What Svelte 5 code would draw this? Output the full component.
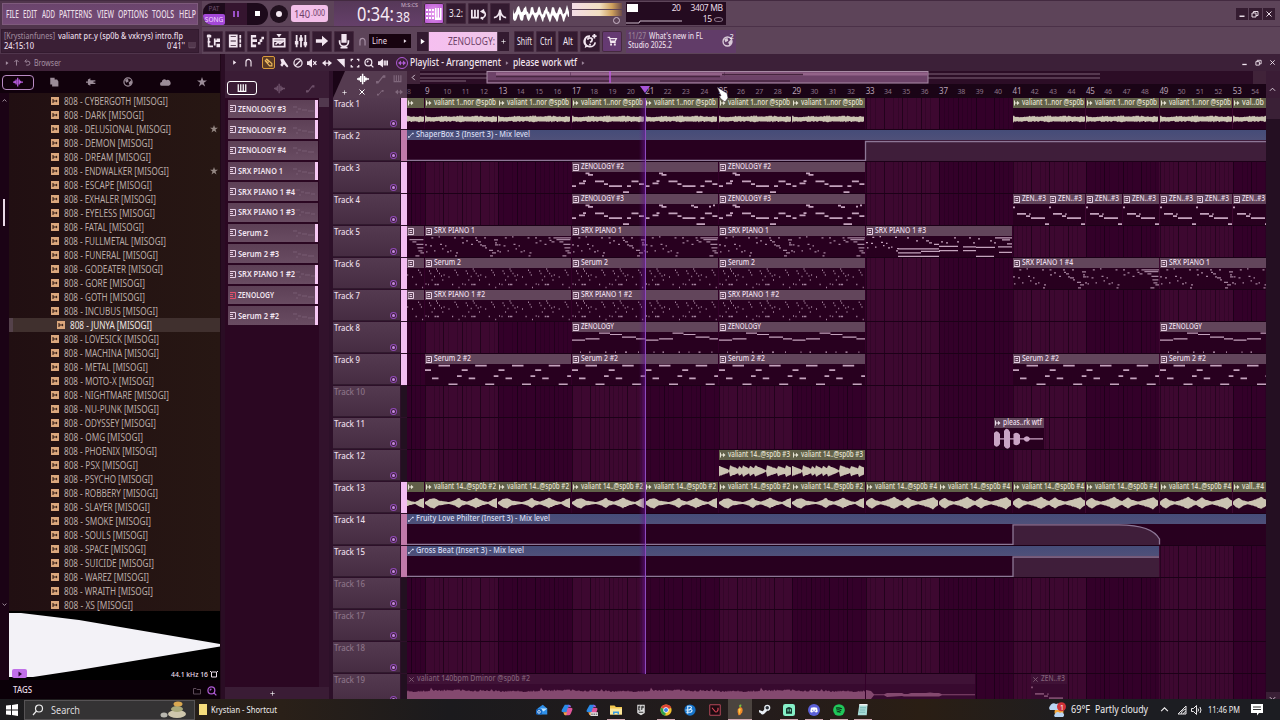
<script lang="ts">
	type Clip = {
		at: number;
		len: number;
		label: string;
		lw: number;
		kind: 'notes' | 'audio' | 'auto' | 'voice';
		shape?: string;
		phase?: number;
		muted?: boolean;
	};

	const BAR = 18.363; // px per bar
	const ORIGIN = 8.02; // first visible bar

	const menu: [string, number][] = [
		['FILE', 13], ['EDIT', 14], ['ADD', 13], ['PATTERNS', 33],
		['VIEW', 17], ['OPTIONS', 30], ['TOOLS', 22], ['HELP', 17]
	];

	const samples: [string, number][] = [
		['CYBERGOTH', 104], ['DARK', 80], ['DELUSIONAL', 107], ['DEMON', 89], ['DREAM', 87],
		['ENDWALKER', 105], ['ESCAPE', 88], ['EXHALER', 92], ['EYELESS', 91], ['FATAL', 80],
		['FULLMETAL', 102], ['FUNERAL', 94], ['GODEATER', 99], ['GORE', 81], ['GOTH', 81],
		['INCUBUS', 94], ['JUNYA', 82], ['LOVESICK', 95], ['MACHINA', 95], ['METAL', 84],
		['MOTO-X', 90], ['NIGHTMARE', 105], ['NU-PUNK', 95], ['ODYSSEY', 92], ['OMG', 79],
		['PHOENIX', 93], ['PSX', 74], ['PSYCHO', 89], ['ROBBERY', 94], ['SLAYER', 86],
		['SMOKE', 87], ['SOULS', 84], ['SPACE', 82], ['SUICIDE', 90], ['WAREZ', 85],
		['WRAITH', 89], ['XS', 69]
	];
	const starred = ['DELUSIONAL', 'ENDWALKER'];

	const patterns: [string, number, boolean][] = [
		['ZENOLOGY #3', 48, true], ['ZENOLOGY #2', 48, true], ['ZENOLOGY #4', 48, false],
		['SRX PIANO 1', 45, true], ['SRX PIANO 1 #4', 57, false], ['SRX PIANO 1 #3', 57, false],
		['Serum 2', 30, true], ['Serum 2 #3', 41, false], ['SRX PIANO 1 #2', 57, true],
		['ZENOLOGY', 36, true], ['Serum 2 #2', 41, true]
	];

	// period (px) then x, y, w of every note
	const melody = [
		[0, 14, 4], [7, 11.3, 6], [11, 9, 3], [13.5, 1.3, 4], [16, 2.8, 5], [23, 9.2, 9], [32, 12, 4],
		[37, 14, 13], [51, 20, 6], [55, 14, 4], [59.5, 9.2, 7], [67, 12, 5]
	];
	const piano = [
		[0, 9, 2], [1, 16, 1.5], [5, 10, 2], [6.3, 2, 2], [9, 15, 1.5], [13.5, 1, 1.5], [15, 8.5, 2],
		[17, 13, 1.5], [20, 10, 1.5], [22, 16, 2], [25, 15, 1.5], [29, 2, 2], [30, 20, 2], [31, 17, 2],
		[36.5, 2, 2], [37, 7, 2], [41, 5, 2], [46, 8.5, 2], [50, 2, 2], [51, 4.5, 2], [53, 6, 3],
		[55, 9, 2], [57, 10, 4], [59, 2, 2], [60, 12, 2], [64, 14.5, 4], [65, 20, 3], [67, 17, 4],
		[69, 4, 4], [70, 7, 2], [70, 9, 3], [72, 15, 2]
	];
	const pianoTail = [
		...piano.filter((n) => n[0] < 55),
		[55, 2, 18], [58, 3.8, 14], [61, 6, 4], [65, 8.5, 7], [66, 12, 6], [67, 15, 4], [64, 20, 4], [69, 17, 4]
	];
	const shapes: Record<string, { period: number; notes: number[][]; tall?: boolean; bold?: boolean }> = {
		zen2: { period: 73.45, bold: true, notes: melody },
		zen3: {
			period: 146.9,
			bold: true,
			notes: [
				...melody,
				...melody.map(([x, y, w]) => [x + 73.45, y, w]),
				[119, 1.5, 3], [122, 3, 4], [130, 20, 3], [137, 2.5, 2], [141, 1.2, 2]
			]
		},
		zen: {
			period: 73.45,
			notes: [
				[0, 8.3, 13], [13.5, 7, 14], [27, 1.2, 11], [38, 2.6, 12], [50, 5.3, 14], [64, 7, 9],
				[8, 20.3, 1], [17, 20.3, 1.5], [33, 20.3, 1.5], [43, 20.3, 1], [53, 20.3, 2], [66, 20.3, 1]
			]
		},
		zenShort: {
			period: 36.73,
			bold: true,
			notes: [[0, 3.3, 2], [4, 9.7, 9], [13, 12, 4], [16.3, 10, 1.3], [18, 14, 14], [32, 20, 5]]
		},
		piano: {
			period: 146.9,
			notes: [...piano, ...pianoTail.map(([x, y, w]) => [x + 73.45, y, w])]
		},
		piano3: {
			period: 146.9,
			notes: [
				...piano.filter((n) => n[0] < 32).map(([x, y, w]) => [x, y * 0.75, w]),
				[32, 13, 41], [32, 17, 23], [55, 15.5, 19], [32, 20.5, 41], [73, 10.5, 19], [73, 14.8, 19],
				[97, 11, 13], [97, 14.8, 13], [110, 11.5, 19], [110, 20.5, 18], [129, 2, 17], [132, 11, 14],
				[133, 16.5, 13], [41, 2, 2], [50, 5, 2], [56, 2, 2], [60, 5, 3], [63, 7, 3], [68, 8.5, 5],
				[75, 6, 2], [80, 7, 2], [88, 2, 2], [91, 6, 2], [103, 2, 2], [107, 7, 2], [112, 3, 2],
				[124, 5, 2], [128, 7, 2], [136, 4, 8], [141, 8, 5]
			]
		},
		serum: {
			period: 36.73,
			tall: true,
			notes: [
				[0.5, 16, 1], [4, 3, 1], [5.3, 5.5, 1], [6.6, 12, 1], [9, 8.5, 1], [11, 1, 1], [12, 3, 1],
				[14, 5.5, 1], [16, 8, 1], [17.3, 12, 1], [18.6, 7, 1], [23.5, 9, 1], [29.5, 2.2, 1],
				[31, 4.5, 1], [32.3, 7, 1], [9.5, 16.5, 1.5], [11.5, 16.5, 2.4], [27, 16.5, 1.2],
				[33.5, 19.5, 1], [3, 16.5, 1]
			]
		},
		serum2: {
			period: 36.73,
			bold: true,
			notes: [[0, 6, 6], [7, 14.3, 6.5], [13.5, 1.4, 11.5], [23.5, 20.3, 9], [32, 12, 4.7]]
		}
	};

	// amplitude keyframes [x, amp] of the audio clips
	const envs: Record<string, { period: number; keys: number[][]; rough: number }> = {
		loop: {
			period: 73.45,
			rough: 0.42,
			keys: [[0, 4.5], [2, 3], [12, 2.8], [20, 3.6], [28, 2.6], [36, 4.2], [40, 3], [52, 3.6], [64, 3], [73.4, 3.8]]
		},
		pad: {
			period: 73.45,
			rough: 0.16,
			keys: [
				[0, 1], [5, 4.6], [9, 5.6], [14, 2.6], [24, 1], [30, 3], [34, 5.6], [37, 2.8], [42, 1.5],
				[48, 4], [51, 5.6], [57, 2.6], [63, 1], [69, 4.4], [72, 5.8], [73.4, 2]
			]
		},
		pad4: {
			period: 73.45,
			rough: 0.16,
			keys: [
				[0, 1.5], [3, 4.4], [6, 5.8], [10, 3], [15, 1.4], [22, 3.6], [28, 6.4], [33, 3.4], [36, 2],
				[42, 6], [46, 3.4], [52, 1.5], [60, 3.8], [67, 6.4], [70, 4], [73.4, 2]
			]
		},
		chop: {
			period: 73.45,
			rough: 0.14,
			keys: [
				[0, 5.6], [9, 2], [10, 0.6], [11, 6], [19, 2.4], [20, 5.4], [23, 3], [24, 6], [30, 2.6],
				[31, 5.4], [35, 3], [36, 6], [45, 2], [47, 0.6], [48, 6], [58, 2.4], [59, 5.4], [66, 3],
				[67, 6], [73.4, 3.4]
			]
		},
		full: {
			period: 110,
			rough: 0.24,
			keys: [[0, 8], [22, 7.5], [24, 11], [27, 8], [48, 9], [70, 8], [80, 9], [98, 7.5], [110, 8]]
		}
	};

	function noise(i: number) {
		const s = Math.sin(i * 127.1 + 311.7) * 43758.5453;
		return s - Math.floor(s);
	}

	function envAt(keys: number[][], x: number) {
		for (let i = 1; i < keys.length; i++) {
			const [x1, a1] = keys[i];
			const [x0, a0] = keys[i - 1];
			if (x <= x1) return a0 + ((a1 - a0) * (x - x0)) / (x1 - x0);
		}
		return keys[keys.length - 1][1];
	}

	function wavePath(shape: string, w: number, phase = 0) {
		const { period, keys, rough } = envs[shape];
		const mid = shape === 'full' ? 14 : 11;
		let top = '';
		let bottom = '';
		for (let x = 0; x <= w; x += 1) {
			const u = (x + phase) % period;
			const a = envAt(keys, u) * (1 - rough * noise(Math.round(u)));
			const b = envAt(keys, u) * (1 - rough * noise(Math.round(u) + 500));
			top += `L${x} ${(mid - a).toFixed(1)}`;
			bottom = `L${x} ${(mid + b).toFixed(1)}` + bottom;
		}
		return `M0 ${mid}${top}${bottom}Z`;
	}

	function notePath(shape: string, w: number, phase = 0) {
		const { period, notes, tall, bold } = shapes[shape];
		const h = bold ? 1.7 : tall ? 1.5 : 1.2;
		let d = '';
		for (let base = -phase; base < w; base += period) {
			for (const [nx, ny, nw] of notes) {
				const x = base + nx;
				if (x < 0 || x >= w) continue;
				const right = Math.min(nw, w - x);
				d += `M${x.toFixed(1)} ${ny - 0.7}h${right.toFixed(1)}v${h}h${-right.toFixed(1)}z`;
			}
		}
		return d;
	}

	const px = (bar: number) => (bar - ORIGIN) * BAR;

	function seq(label: string, lw: number, shape: string, starts: number[], len: number): Clip[] {
		return starts.map((at) => ({ at, len, label, lw, kind: 'notes', shape }));
	}
	function audio(label: string, lw: number, shape: string, starts: number[], len = 4): Clip[] {
		return starts.map((at) => ({ at, len, label, lw, kind: 'audio', shape }));
	}
	function stub(kind: 'notes' | 'audio', shape: string, phase: number): Clip {
		return { at: ORIGIN, len: 9 - ORIGIN, label: '', lw: 0, kind, shape, phase };
	}
	const END = 54.83;

	const lanes: Clip[][] = [
		[
			stub('audio', 'loop', 55),
			...audio('valiant 1..nor @sp0b', 62, 'loop', [9, 13, 17, 21, 25, 29, 41, 45, 49]),
			...audio('val..0b', 22, 'loop', [53], END - 53)
		],
		[{ at: ORIGIN, len: END - ORIGIN, label: 'ShaperBox 3 (Insert 3) - Mix level', lw: 114, kind: 'auto', shape: 'shaper' }],
		seq('ZENOLOGY #2', 43, 'zen2', [17, 25], 8),
		[
			...seq('ZENOLOGY #3', 43, 'zen3', [17, 25], 8),
			...seq('ZEN..#3', 24, 'zenShort', [41, 43, 45, 47, 49, 51], 2),
			...seq('ZEN..#3', 23, 'zenShort', [53], END - 53)
		],
		[
			stub('notes', 'piano', 129),
			...seq('SRX PIANO 1', 41, 'piano', [9, 17, 25], 8),
			...seq('SRX PIANO 1 #3', 51, 'piano3', [33], 8)
		],
		[
			stub('notes', 'serum', 18.4),
			...seq('Serum 2', 27, 'serum', [9, 17, 25], 8),
			...seq('SRX PIANO 1 #4', 51, 'piano', [41], 8),
			...seq('SRX PIANO 1', 41, 'piano', [49], END - 49)
		],
		[stub('notes', 'serum', 18.4), ...seq('SRX PIANO 1 #2', 51, 'serum', [9, 17, 25], 8)],
		[...seq('ZENOLOGY', 33, 'zen', [17, 25], 8), ...seq('ZENOLOGY', 33, 'zen', [49], END - 49)],
		[
			...seq('Serum 2 #2', 37, 'serum2', [9, 17, 25, 41], 8),
			...seq('Serum 2 #2', 37, 'serum2', [49], END - 49)
		],
		[],
		[{ at: 40, len: 2.75, label: 'pleas..rk wtf', lw: 39, kind: 'voice' }],
		audio('valiant 14..@sp0b #3', 62, 'chop', [25, 29]),
		[
			stub('audio', 'pad', 55),
			...audio('valiant 14..@sp0b #2', 62, 'pad', [9, 13, 17, 21, 25, 29]),
			...audio('valiant 14..@sp0b #4', 62, 'pad4', [33, 37, 41, 45, 49]),
			...audio('vall..#4', 22, 'pad4', [53], END - 53)
		],
		[{ at: ORIGIN, len: END - ORIGIN, label: 'Fruity Love Philter (Insert 3) - Mix level', lw: 134, kind: 'auto', shape: 'philter' }],
		[{ at: ORIGIN, len: 49 - ORIGIN, label: 'Gross Beat (Insert 3) - Mix level', lw: 108, kind: 'auto', shape: 'gross' }],
		[],
		[],
		[],
		[
			{ at: ORIGIN, len: 25, label: 'valiant 140bpm Dminor @sp0b #2', lw: 113, kind: 'audio', shape: 'full', muted: true },
			{ at: 33, len: 6, label: '', lw: 0, kind: 'voice', muted: true },
			{ at: 42, len: 2, label: 'ZEN..#3', lw: 24, kind: 'notes', shape: 'zenShort', muted: true }
		]
	];

	const autos: Record<string, { line: string; fill: string }> = {
		shaper: { line: 'M0 20.5H458.5V1.5H860', fill: 'M458.5 21V1.5H860V21Z' },
		philter: {
			line: 'M0 20.5H606V.8H712Q745 1 752.5 15V20.5',
			fill: 'M606 21V.8H712Q745 1 752.5 15V21Z'
		},
		gross: { line: 'M0 20.5H606V1H752.5', fill: 'M606 21V1H752.5V21Z' }
	};

	const audioMarks = [1, 3, 4, 5, 6, 7, 8, 9, 13];
	const autoMarks = [2, 14, 15];
	const emptyTracks = [10, 16, 17, 18, 19];

	const bars = Array.from({ length: 46 }, (_, i) => i + 9);

	// stroke (s) and fill (f) outlines on a 16 unit box
	const icons: Record<string, { s?: string; f?: string }> = {
		play: { f: 'M5 3l7 5-7 5z' },
		tree: { s: 'M3 4v10h5M10 5v8M10 8h3M1.500 1.500H5', f: 'M1 1h5v3H1zM2 8h3v2H2zM12 5h4v4h-4zM12 11h4v4h-4z' },
		rack: { s: 'M2 1.5h8v3H2zM2 6.5h8v3H2zM2 11.5h8v3H2z', f: 'M13 1h2v4h-2zM13 6h2v4h-2zM13 11h2v4h-2z' },
		roll: { f: 'M1 1h6v3H3v2h5v3H3v3h4v3H1zM9 9h3v3H9zM11 6h3v3h-3zM13 3h3v3h-3z' },
		list: { s: 'M1.500 5.500h13v9h-13zM4 12l3-3 2 2 4-3M1 8h14', f: 'M5 0h6L8 4z' },
		mixer: { s: 'M3 1v14M8 1v14M13 1v14', f: 'M1 8h4v4H1zM6 4h4v4H6zM11 9h4v4h-4z' },
		arrow: { f: 'M1 6h7V2l7 6-7 6v-4H1z' },
		mic: { s: 'M3 7v2a5 5 0 0010 0V7M8 14v2M4 15.5h8', f: 'M5 0h6v10H5z' },
		magnet: { s: 'M3.5 15V7a4.5 4.5 0 019 0v8' },
		pencil: { s: 'M2 5l3-3 9 8v4h-4zM4 7l3-3M6 9l3-3' },
		brush: { f: 'M2 2l5-1 3 5 5 7-2 2-5-5-3 4-3-3 2-3z' },
		nope: { s: 'M8 1.5a6.5 6.5 0 100 13 6.5 6.5 0 000-13zM3.5 12.5l9-9' },
		mute: { s: 'M10 5l5 6M15 5l-5 6', f: 'M0 5h3l5-4v14l-5-4H0z' },
		slip: { f: 'M0 8l6-5v10zM16 8l-6-5v10zM6 7h4v2H6z' },
		slice: { f: 'M1 2l13-1v14L9 10z' },
		select: { s: 'M2 5V2h3M11 2h3v3M14 11v3h-3M5 14H2v-3' },
		zoom: { s: 'M7 1.5a5.5 5.5 0 100 11 5.5 5.5 0 000-11zM11 11l4 4M4.5 7L7 4.5' },
		speaker: { s: 'M10 4v8M12.5 4v8M15 4v8', f: 'M0 5h3l5-4v14l-5-4H0z' },
		keys: { s: 'M2 2v11.5h12V2M6 2v11M10 2v11' },
		wave: { s: 'M0 8h2M3 6v4M5 4v8M7.5 1v14M10 4v8M12 6v4M13 8h3' },
		auto: { s: 'M1 13h3l7-9h3', f: 'M0 11h4v4H0zM11 2h4v4h-4z' },
		grid: { f: 'M0 3h2v2H0zM0 7h2v2H0zM0 11h2v2H0zM3 3h2v2H3zM3 7h2v2H3zM3 11h2v2H3zM6 3h2v2H6zM6 7h2v2H6zM6 11h2v2H6zM9 2h1.5v9.500H11.500V2H13v9.500h1V2h1.500v12H9z' },
		metro: { s: 'M1 12c3 0 6-3 7-9 1 6 4 9 7 9M8 3v12' },
		loop: { s: 'M1 3v9h7V3M4.5 3v9M11 12a3.5 3.5 0 103-7M15 3l-3 2 3 2M11 12l3 2' },
		help: { s: 'M8 2.5a6 6 0 106 7M8 2.5a6 6 0 00-5 10M5.5 6.5q0-2 2.5-2t2.5 2T8 9.5M13 0v5M10.5 2.5h5', f: 'M7 11h2v2H7zM2 16l1-5 3 3z' },
		cart: { s: 'M1 2h3l2 8h8M5 4h10l-2 4H6', f: 'M5 12h3v3H5zM11 12h3v3h-3z' },
		files: { f: 'M2 1h7v3h4l2 3v8H5v-3H2z' },
		plug: { f: 'M0 7h3V4l4-2v3h8v2h-3v2h3v2H7v3l-4-2V9H0z' },
		globe: { s: 'M8 1.5a6.5 6.5 0 100 13 6.5 6.5 0 000-13z', f: 'M3 4l5-1 1 4-4 2zM9 9l4-4 2 4-4 5z' },
		cloud: { f: 'M3 14a3 3 0 010-6 4 4 0 017-3 4 4 0 014 9z' },
		star: { f: 'M8 0l2 5.5h6l-5 3.7 2 6-5-3.7-5 3.7 2-6-5-3.7h6z' },
		up: { s: 'M8 15V3M3 7l5-5 5 5' },
		back: { s: 'M3 5h6a4 4 0 010 9H5M6 1L2 5l4 4' },
		folder: { s: 'M1 3h5l2 2h7v9H1z' },
		chip: { s: 'M3 4h10v10H3zM0 2l3 3M16 2l-3 3' },
		close: { s: 'M3 3l10 10M13 3L3 13' },
		min: { f: 'M3 11h10v3H3z' },
		restore: { s: 'M2 6h8v8H2zM5 6V3h9v8h-4' },
		plus: { s: 'M8 1v14M1 8h14' },
		chevUp: { s: 'M2 11l6-6 6 6' },
		chevDown: { s: 'M2 5l6 6 6-6' },
		chevLeft: { s: 'M11 2L5 8l6 6' }
	};

	const tools = ['tree', 'rack', 'roll', 'list', 'mixer', 'arrow', 'mic'];
	const brushes = ['brush', 'nope', 'mute', 'slip', 'slice', 'select', 'zoom', 'speaker'];
	const apps: [string, boolean][] = [
		['outlook', false], ['copilot', false], ['copilot3', false], ['explorer', true], ['epic', false],
		['chrome', true], ['bnet', false], ['valorant', false], ['fl', true], ['steam', false],
		['wave', true], ['discord', true], ['spotify', true], ['notes', true]
	];

	// scope trace: a thick ragged band around a sine
	const scopeTop: string[] = [];
	const scopeBottom: string[] = [];
	for (let x = 0; x <= 56; x++) {
		const mid = 10 + Math.sin(x * 0.9) * 3.6;
		scopeTop.push(`${x},${(mid - 2.4 - noise(x) * 3).toFixed(1)}`);
		scopeBottom.unshift(`${x},${(mid + 2.4 + noise(x + 90) * 3).toFixed(1)}`);
	}
	const scope = [...scopeTop, ...scopeBottom].join(' ');
</script>

{#snippet fit(text: string, w: number, size: number)}
	<svg class="fit" width={w} height={size + 3}>
		<text x="0" y={size} font-size={size} textLength={w} lengthAdjust="spacingAndGlyphs">{text}</text>
	</svg>
{/snippet}

{#snippet icon(name: string, size: number)}
	<svg class="icon" width={size} height={size} viewBox="0 0 16 16">
		{#if icons[name].f}<path class="f" d={icons[name].f} />{/if}
		{#if icons[name].s}<path class="s" d={icons[name].s} />{/if}
	</svg>
{/snippet}

{#snippet app(name: string)}
	<svg class="icon" width="12" height="12" viewBox="0 0 16 16">
		{#if name === 'outlook'}
			<path fill="#2f8fe8" d="M2 6l7-5 6 5v8H2z" /><path fill="#bfe3ff" d="M6 6h9l-5 4z" />
			<rect x="0" y="7" width="8" height="7" rx="1" fill="#1565c0" /><circle cx="4" cy="10.5" r="1.8" fill="none" stroke="#fff" />
		{:else if name === 'copilot' || name === 'copilot3'}
			<path fill="#2a8be8" d="M5 1h6L8 11H3q-3 0-2-3z" /><path fill="#8f62e6" d="M10 1q3 0 3.5 3H9.5z" />
			<path fill="#e0559a" d="M9 5h4q3 0 2 3l-2 5q-1 2-3 2H6z" /><path fill="#f2a04a" d="M3 11h5l-1 4H6q-2 0-3-4z" />
			{#if name === 'copilot3'}<path fill="#ddd" d="M6 11h10v5H6z" /><path fill="#222" d="M7 13h2v1H7zM10 13h2v1h-2zM13 13h2v1h-2z" />{/if}
		{:else if name === 'explorer'}
			<path fill="#f3c84e" d="M0 2h6l2 2h8v10H0z" /><path fill="#fce79a" d="M0 6h16v8H0z" /><path fill="#3a9be0" d="M4 10h8v4h-2v-2H6v2H4z" />
		{:else if name === 'epic'}
			<path fill="#ddd" d="M3 1h10v11l-5 3-5-3z" /><path stroke="#222" stroke-width="1.2" fill="none" d="M5 3v5M5 3h2M5 5h2M5 8h2M9 3v5M9 3h2v2H9M5 11h6" />
		{:else if name === 'chrome'}
			<circle cx="8" cy="8" r="7.5" fill="#f2c230" /><path fill="#df4436" d="M8 8L1.5 5a7.5 7.5 0 0113.5 0z" /><path fill="#2fa04c" d="M8 8l-1 7.5A7.5 7.5 0 011.5 5z" />
			<circle cx="8" cy="8" r="3.6" fill="#fff" /><circle cx="8" cy="8" r="2.7" fill="#3f80ea" />
		{:else if name === 'bnet'}
			<circle cx="8" cy="8" r="7.5" fill="#1673c9" /><path fill="none" stroke="#d3ecff" stroke-width="1.6" d="M5 13V3h3q4 1 0 4 5 1 1 4H3M2 8h6" />
		{:else if name === 'valorant'}
			<path fill="#1c0a10" stroke="#b8495a" stroke-width="1.3" d="M1 1h14v14H1z" /><path fill="none" stroke="#e2475a" stroke-width="1.5" d="M4 5l5 6M12 5v3l-2 3" />
		{:else if name === 'fl'}
			<path fill="#f08a28" d="M8 4q5 1 3 7-2 4-5 4-2-4-1-8z" /><path fill="#f8cf52" d="M6 7q2-2 3 0l-2 7z" /><path fill="#7bbf3e" d="M7 4q-1-4 3-3 0 2-1 3z" />
		{:else if name === 'steam'}
			<circle cx="11" cy="5" r="3.2" fill="#2a3038" stroke="#e8eef4" stroke-width="1.8" /><path fill="#e8eef4" d="M0 8l5 1.5L8 6l3 3-4 4a3 3 0 01-5-1L0 11z" />
		{:else if name === 'wave'}
			<rect x="0" y="0" width="16" height="16" rx="3" fill="#86f0c8" /><path fill="#143a30" d="M4 6q4-4 8 0v7H4z" /><path fill="#86f0c8" d="M6 7h1.5v3H6zM9 7h1.5v3H9z" />
		{:else if name === 'discord'}
			<circle cx="8" cy="8" r="8" fill="#5b5fd8" /><path fill="#fff" d="M4 5q4-1.5 8 0l1 5q-2 2-3 1l-.5-1h-3L6 11q-2 1-3-1z" /><path fill="#5b5fd8" d="M5.5 7.5h1.5V9H5.5zM9 7.5h1.5V9H9z" />
		{:else if name === 'spotify'}
			<circle cx="8" cy="8" r="7.8" fill="#20c75a" /><path fill="none" stroke="#0c2a16" stroke-width="1.4" d="M4 5.5q4-1 8 1M4.5 8q3.5-1 6.5 1M5 10.5q3-1 5 .8" />
		{:else}
			<path fill="#a8dcd8" d="M3 1h11l-1 14H1z" /><path stroke="#6aa8a8" d="M4 5h8M4 8h7M3 11h8" /><path fill="#f2f2f2" d="M3 0h11v2H3z" />
		{/if}
	</svg>
{/snippet}

<div class="screen">
	<header class="top">
		<div class="corner">
			<nav class="menu">
				{#each menu as [name, w]}{@render fit(name, w, 10)}{/each}
			</nav>
			<div class="hint">
				<div class="hint-line">
					<span class="dim">{@render fit('[Krystianfunes]', 51, 8.5)}</span>{@render fit('valiant pr..y (sp0b & vxkrys) intro.flp', 125, 8.5)}
				</div>
				<div class="hint-line">
					{@render fit('24:15:10', 30, 8.5)}<span class="grow"></span>{@render fit("0'41''", 18, 8.5)}
					<span class="dim shade">{@render icon('keys', 8)}</span>
				</div>
			</div>
		</div>

		<div class="bars">
			<div class="bar">
				<div class="transport">
					<div class="mode"><span class="pat">PAT</span><span class="song">SONG</span></div>
					<div class="key lit-pause"><i></i><i></i></div>
					<div class="key"><b class="stop"></b></div>
				</div>
				<div class="rec"><b></b></div>
				<div class="tempo">{@render fit('140', 16, 11)}{@render fit('.000', 14, 8)}</div>
				<div class="clock">
					<span class="time">{@render fit('0:34:', 37, 20)}<span class="cents">{@render fit('38', 14, 15)}</span></span>
					<span class="unit">{@render fit('M:S:CS', 17, 5)}</span>
				</div>
				<div class="btn hot">{@render icon('grid', 16)}</div>
				<div class="btn">{@render fit('3.2:', 14, 10)}</div>
				<div class="btn">{@render icon('loop', 14)}</div>
				<div class="btn">{@render icon('metro', 14)}</div>
				<svg class="osc" width="56" height="20"><polygon points={scope} /></svg>
				<div class="meter"><i></i><i></i><b></b></div>
				<div class="cpu">
					<span class="poly"></span>
					<svg class="graph" width="56" height="5"><path d="M0 4h13l1-2h42" /></svg>
					<div class="cpu-nums">
						<span>20</span><span>3407 MB</span>
						<span></span><span>15 <em></em></span>
					</div>
				</div>
				<span class="grow"></span>
				<div class="win boxed">
					{#each ['min', 'restore', 'close'] as n}<span>{@render icon(n, 8)}</span>{/each}
				</div>
			</div>

			<div class="bar">
				{#each tools as t}<div class="btn">{@render icon(t, 14)}</div>{/each}
				<span class="snap-icon">{@render icon('magnet', 9)}</span>
				<div class="snap">{@render fit('Line', 15, 8.5)}{@render icon('play', 6)}</div>
				<div class="chooser">
					<span class="nub">{@render icon('play', 9)}</span>
					<span class="pattern">{@render fit('ZENOLOGY:', 47, 11)}</span>
					<span class="nub">{@render icon('plus', 5)}</span>
				</div>
				<div class="btn">{@render fit('Shift', 15, 10)}</div>
				<div class="btn">{@render fit('Ctrl', 12, 10)}</div>
				<div class="btn">{@render fit('Alt', 10, 10)}</div>
				<div class="btn">{@render icon('help', 14)}</div>
				<div class="btn shop">{@render icon('cart', 10)}</div>
				<div class="news">
					<div>
						<div class="hint-line"><span class="dim">{@render fit('11/27', 18, 8)}</span>{@render fit("What's new in FL", 54, 8)}</div>
						<div class="hint-line">{@render fit('Studio 2025.2', 44, 8)}</div>
					</div>
					<span class="news-globe">{@render icon('globe', 11)}<sup>2</sup></span>
				</div>
			</div>
		</div>
	</header>

	<main class="work">
		<aside class="browser">
			<div class="browser-head">
				{@render icon('play', 6)}{@render icon('up', 7)}{@render icon('back', 7)}
				{@render fit('Browser', 27, 8.5)}
			</div>
			<div class="tabs">
				<span class="tab on">{@render icon('wave', 10)}</span>
				{#each ['files', 'plug', 'globe', 'cloud', 'star'] as t}
					<span class="tab">{@render icon(t, 10)}</span>
				{/each}
			</div>
			<div class="tree">
				<div class="rail">
					{@render icon('chevUp', 5)}
					<i></i>
					{@render icon('chevDown', 5)}
				</div>
				<ul>
					{#each samples as [name, w]}
						<li class:on={name === 'JUNYA'}>
							<svg class="file" width="8" height="8" viewBox="0 0 8 8"><path d="M0 0h8v8H0z" /><path class="ink" d="M1.5 2h1v1.5H5V2.5L6.5 4 5 5.5v-1H2.500V6h-1z" /></svg>
							{@render fit(`808 - ${name} [MISOGI]`, w, 10.5)}
							{#if starred.includes(name)}<span class="fav">{@render icon('star', 8)}</span>{/if}
						</li>
					{/each}
				</ul>
			</div>
			<div class="preview">
				<svg width="211" height="67"><path d="M0 2H12L70 9 211 33V35.5L70 59 24 66H0Z" /></svg>
				<span class="preview-play">{@render icon('play', 8)}</span>
				<span class="rate">{@render fit('44.1 kHz 16', 37, 7.5)}{@render icon('chip', 8)}</span>
			</div>
			<div class="tags">
				{@render fit('TAGS', 19, 8)}
				<span class="grow"></span>
				<span class="faint">{@render icon('folder', 8)}</span>
				<span class="violet">{@render icon('zoom', 10)}</span>
			</div>
		</aside>

		<section class="playlist">
			<div class="title">
				{@render icon('play', 7)}
				<span class="mag">{@render icon('magnet', 9)}</span>
				<span class="draw">{@render icon('pencil', 9)}</span>
				{#each brushes as b}{@render icon(b, 10)}{/each}
				<span class="violet ring">{@render icon('slip', 8)}</span>
				{@render fit('Playlist - Arrangement', 91, 10)}
				<span class="sep">{@render icon('play', 6)}</span>
				{@render fit('please work wtf', 64, 10)}
				<span class="sep">{@render icon('play', 6)}</span>
				<span class="grow"></span>
				<div class="win">
					{#each ['min', 'restore', 'close'] as n}<span>{@render icon(n, 7)}</span>{/each}
				</div>
			</div>

			<div class="body">
				<div class="picker">
					<div class="picker-tabs">
						<span class="on">{@render icon('keys', 10)}</span>
						<span>{@render icon('wave', 11)}</span>
						<span>{@render icon('auto', 9)}</span>
					</div>
					<div class="picker-main">
						<div class="picker-list">
							{#each patterns as [name, w, used]}
								<div class="pat-item" class:used class:current={name === 'ZENOLOGY'}>
									<svg class="score" width="6" height="7"><path d="M0 .5H5.5V6.5H0M0 2.5H3M0 4.5H3" /></svg>
									{@render fit(name, w, 9)}
									<svg class="thumb" width="22" height="8"><path d="M0 2h4M5 4h3M9 5h5M15 6h6M3 7h2" /></svg>
								</div>
							{/each}
						</div>
						<div class="picker-scroll"><i></i></div>
					</div>
					<div class="picker-add">{@render icon('plus', 5)}</div>
				</div>

				<div class="arranger">
					<div class="arr-head">
						<div class="arr-tools">
							<div><span class="bright">{@render icon('wave', 12)}</span>{@render icon('auto', 10)}{@render icon('keys', 9)}</div>
							<div><span class="bright">{@render icon('plus', 5)}</span><span class="bright">{@render icon('close', 8)}</span>{@render icon('auto', 7)}{@render icon('slip', 8)}</div>
						</div>
						<div class="arr-right">
							<div class="overview">
								<span class="ov-nub">{@render icon('chevLeft', 7)}</span>
								<svg width="833" height="13">
									<path class="ov-track" d="M0 3H680M0 7H680M0 10H46" />
									<rect class="ov-win" x="67" y=".5" width="441" height="11.5" />
									<path class="ov-light" d="M76 3H150M151 3H304M305 3H508" />
									<path class="ov-dark" d="M76 5.5H300M302 3.5H383M68 10H190M240 10H370" />
									<path class="ov-cursor" d="M190 0V12" />
								</svg>
								<span class="ov-end"></span>
							</div>
							<div class="ruler">
								<span class="first">8</span>
								{#each bars as b}
									<span class:strong={b % 4 === 1}>{b}</span>
								{/each}
							</div>
						</div>
						<div class="corner-up">{@render icon('chevUp', 7)}</div>
					</div>

					<div class="arr-body">
						<div class="heads">
							{#each lanes as _, i}
								<div class="head" class:empty={emptyTracks.includes(i + 1)}>
									<div class="plate">
										{@render fit(`Track ${i + 1}`, i < 9 ? 26 : 31, 9)}
										<span class="led"></span>
									</div>
									<div
										class="mark"
										class:pink={audioMarks.includes(i + 1)}
										class:rose={autoMarks.includes(i + 1)}
									></div>
								</div>
							{/each}
						</div>

						<div class="lanes">
							{#each lanes as clips}
								<div class="lane">
									{#each clips as c}
										{@const w = c.len * BAR - 0.6}
										<div class="clip {c.kind}" class:muted={c.muted} style="left: {px(c.at)}px; width: {w}px">
											<div class="clip-head">
												{#if c.muted && c.label}
													{@render icon('close', 7)}
												{:else if c.kind === 'notes'}
													<svg class="score" width="6" height="7"><path d="M0 .5H5.5V6.5H0ZM1.5 2.5H4M1.5 4.5H4" /></svg>
												{:else if c.kind === 'auto'}
													{@render icon('auto', 6)}
												{:else if !c.muted}
													<svg class="arrowed" width="6" height="6"><path d="M0 .5H1V2.5H3V.8L5.5 3 3 5.2V3.5H1V5.5H0Z" /></svg>
												{/if}
												{#if c.label}{@render fit(c.label, c.lw, 8.3)}{/if}
											</div>
											<svg class="clip-body" width={w} height="21">
												{#if c.kind === 'notes'}
													<path class="notes" class:soft={c.shape === 'serum' || c.shape === 'piano'} d={notePath(c.shape ?? '', w, c.phase)} />
												{:else if c.kind === 'audio'}
													<path class="wave" d={wavePath(c.shape ?? '', w, c.phase)} />
												{:else if c.kind === 'auto'}
													<path class="area" d={autos[c.shape ?? ''].fill} />
													<path class="curve" d={autos[c.shape ?? ''].line} />
												{:else if c.muted}
													<path class="wave" d="M0 6L5 7 8 10.300H18L21 9H36L38 10H42L45 9H60L64 8.500 68 9H73L76 10.300H110V11.300H76L73 12.500H38L36 12 21 13 18 11.300H8L5 15 0 16Z" />
												{:else}
													<path class="wave" d="M0 5Q3 1 6 6V10.300H10V3Q13-2 16 4V10.300H19.500V6Q23 3 26 7V10.300H29.500Q33 6 36 10.300H49V11.500H36Q33 16 29.500 11.500H26V15Q23 19 19.500 16V11.500H16V19Q13 23 10 18V11.500H6V16Q3 21 0 17Z" />
												{/if}
											</svg>
										</div>
									{/each}
								</div>
							{/each}
							<div class="playhead"></div>
						</div>

						<div class="scroll"><i></i><span class="grow"></span><b>{@render icon('chevDown', 7)}</b></div>
					</div>

					<svg class="flag" width="10" height="7"><path d="M0 0H10L5 7Z" /></svg>
					<svg class="cursor" width="13" height="16" viewBox="0 0 13 16"><path d="M0 0l8 5 2 1 1 5-3 4-4-3-2-3 2 0z" /></svg>
				</div>
			</div>
		</section>
	</main>

	<footer class="taskbar">
		<svg class="start" width="12" height="12"><path d="M0 1.5L5 1V5.5H0ZM6 1l6-1V5.5H6ZM0 6.5H5V11L0 10.5ZM6 6.500h6V12L6 11Z" /></svg>
		<div class="search">
			<svg width="12" height="12" viewBox="0 0 12 12"><circle cx="7" cy="4.5" r="3.5" /><path d="M4.5 7L1 11" /></svg>
			{@render fit('Search', 29, 11)}
			<svg class="stones" width="28" height="18" viewBox="0 0 28 18"><ellipse cx="4" cy="14" rx="3.5" ry="2.5" fill="#b9b8b0" /><ellipse cx="17" cy="13" rx="9" ry="4" fill="#cfc7ad" /><ellipse cx="17" cy="8" rx="6" ry="3" fill="#a8a87a" /><ellipse cx="18" cy="3" rx="4.5" ry="2.5" fill="#d9a850" /></svg>
		</div>
		<div class="task"><i></i>{@render fit('Krystian - Shortcut', 66, 9.5)}</div>
		<div class="apps">
			{#each apps as [name, open]}
				<div class="app" class:open class:active={name === 'fl'}>{@render app(name)}</div>
			{/each}
		</div>
		<div class="tray">
			<svg width="19" height="16" viewBox="0 0 19 16"><circle cx="11" cy="10" r="4.5" fill="#f5a83c" /><path fill="#b9d4f2" d="M2 8a3 3 0 010-4 4 4 0 016-2 3 3 0 013 6zM7 15a2 2 0 010-3 3 3 0 015-1 2 2 0 013 4z" /><circle cx="13.5" cy="4.8" r="4.5" fill="#d03238" /><text x="12" y="7.5" font-size="7" fill="#fff">1</text></svg>
			<span class="weather">{@render fit('69°F', 19, 10)}{@render fit('Partly cloudy', 53, 10)}</span>
			<span class="chev">{@render icon('chevUp', 9)}</span>
			<svg class="net" width="10" height="10"><path d="M1 9L9 1V9ZM4 9A6 6 0 019 4M6.5 9A3 3 0 019 6.5" /></svg>
			<svg class="net vol" width="12" height="10"><path d="M.5 3.5h2l3-3v9l-3-3h-2zM7 3.5q1 1.500 0 3M9 2q2 3 0 6" /></svg>
			{@render fit('11:46 PM', 32, 9.5)}
			<svg class="note" width="12" height="12"><path d="M0 0H12V9H8L6 11.5V9H0Z" /><path class="ln" d="M2 3H10M2 5.5H10" /></svg>
		</div>
	</footer>
</div>

<style>
	:global(body) {
		margin: 0;
		background: #12000e;
	}
	.screen {
		width: 1280px;
		height: 720px;
		overflow: hidden;
		display: grid;
		grid-template-rows: 54px 645px 21px;
		background: #2a0d24;
		color: #e9dce7;
		font-family: 'Noto Sans', 'Open Sans', sans-serif;
		font-size: 9px;
		line-height: 1;
	}
	.fit,
	.icon {
		display: block;
		flex: none;
		overflow: visible;
	}
	.fit text {
		fill: currentColor;
	}
	.icon .f {
		fill: currentColor;
	}
	.icon .s {
		fill: none;
		stroke: currentColor;
		stroke-width: 2;
	}
	.grow {
		flex: 1;
	}
	.dim {
		color: #9a8397;
	}
	.shade {
		opacity: 0.5;
	}
	.violet {
		color: #b05ad6;
	}
	.faint {
		color: #5c4a58;
	}

	/* ---------- toolbar ---------- */
	.top {
		display: flex;
		background: #5d4459;
		border-top: 1px solid #432a40;
		box-sizing: border-box;
	}
	.corner {
		width: 202px;
		padding: 2px 4px 0 2px;
		box-sizing: border-box;
		background: #50354c;
	}
	.menu {
		height: 22px;
		display: flex;
		align-items: center;
		gap: 4.4px;
		padding-left: 3px;
		background: linear-gradient(#6a446c, #764c78);
		border: 1px solid #7e5a7c;
		box-sizing: border-box;
		font-weight: 500;
	}
	.hint {
		margin-top: 5px;
		height: 22px;
		padding: 1px 2px;
		box-sizing: border-box;
		background: #3a1f35;
		outline: 1px solid #331a2f;
	}
	.hint-line {
		display: flex;
		align-items: center;
		gap: 3px;
		height: 9.5px;
		font-weight: 500;
	}
	.bars {
		flex: 1;
		min-width: 0;
	}
	.bar {
		height: 26px;
		display: flex;
		align-items: center;
		gap: 2px;
		padding-left: 1px;
		box-sizing: border-box;
		border-bottom: 1px solid #4b3148;
	}
	.bar + .bar {
		height: 28px;
		border-bottom: 0;
	}
	.btn {
		width: 19.9px;
		height: 21px;
		flex: none;
		display: flex;
		align-items: center;
		justify-content: center;
		background: #331a30;
		box-shadow: inset 0 0 0 1px #45293f;
		border-radius: 2px;
		color: #f2e6f0;
	}
	.btn.hot {
		background: radial-gradient(#e9a4ee, #b44ed2);
		color: #fff;
	}
	.btn.shop {
		background: #653a72;
	}
	.transport {
		width: 65px;
		height: 22px;
		flex: none;
		display: flex;
		border-radius: 9px 11px 11px 9px;
		overflow: hidden;
		background: #1d0a1b;
	}
	.mode {
		width: 22px;
		display: flex;
		flex-direction: column;
		font-size: 6.5px;
		text-align: center;
	}
	.mode span {
		height: 11px;
		line-height: 11px;
	}
	.pat {
		color: #6b4d68;
	}
	.song {
		background: #a348d8;
		color: #f3dcff;
		border-radius: 2px;
	}
	.key {
		flex: 1;
		display: flex;
		align-items: center;
		justify-content: center;
		gap: 2px;
	}
	.key.lit-pause {
		background: #35152f;
	}
	.key i {
		width: 2px;
		height: 6px;
		background: #9b50c8;
	}
	.stop {
		width: 5px;
		height: 5px;
		background: #fff;
	}
	.rec {
		width: 18px;
		height: 18px;
		margin: 0 1px 0 0;
		flex: none;
		border-radius: 50%;
		background: #21101f;
		display: flex;
		align-items: center;
		justify-content: center;
	}
	.rec b {
		width: 6px;
		height: 6px;
		border-radius: 50%;
		background: #f5e9f3;
	}
	.tempo {
		width: 37px;
		height: 17px;
		flex: none;
		display: flex;
		align-items: center;
		justify-content: center;
		gap: 1px;
		border-radius: 3px;
		background: #f3bfe9;
		color: #6d4068;
	}
	.clock {
		width: 88px;
		height: 25px;
		margin: 0 0 0 4px;
		flex: none;
		display: flex;
		align-items: flex-start;
		background: linear-gradient(#563858, #65406a);
	}
	.time {
		display: flex;
		gap: 2px;
		margin-left: 23px;
		color: #f6e9f4;
	}
	.cents {
		margin-top: 6px;
	}
	.unit {
		width: 0;
		margin: 1px 0 0 -9px;
		color: #cdb6ca;
	}
	.osc {
		margin: 0 1px;
		flex: none;
	}
	.osc polygon {
		fill: #fff;
	}
	.meter {
		width: 50px;
		height: 21px;
		flex: none;
		display: flex;
		flex-direction: column;
		gap: 1px;
	}
	.meter i {
		height: 6px;
		background: linear-gradient(90deg, #f3dde6, #f2dfc2 55%, #cfa15c 80%, #6d4c48);
	}
	.meter b {
		width: 5px;
		height: 5px;
		margin: 0 2px 0 auto;
		border: 1px solid #cdb9cb;
		border-radius: 50%;
	}
	.cpu {
		width: 100px;
		height: 23px;
		margin-left: 2px;
		flex: none;
		display: grid;
		grid-template: 1fr 6px / 36px 1fr;
		background: #240b20;
	}
	.poly {
		width: 11px;
		height: 8px;
		margin: 2px 0 0 1px;
		background: #fff;
	}
	.graph {
		grid-row: 2;
		grid-column: 1 / 3;
		fill: none;
		stroke: #cdbccb;
	}
	.cpu-nums {
		grid-row: 1 / 3;
		grid-column: 2;
		display: grid;
		grid-template-columns: 19px 1fr;
		align-items: center;
		justify-items: end;
		padding-right: 3px;
		font-size: 8.5px;
		letter-spacing: -0.4px;
	}
	.cpu-nums em {
		display: inline-block;
		width: 7px;
		height: 3px;
		border: 1px solid #8b768a;
		border-radius: 50%;
	}
	.win {
		display: flex;
		gap: 7px;
		padding-right: 4px;
	}
	.boxed {
		gap: 1px;
		padding-right: 5px;
	}
	.boxed span {
		width: 12.5px;
		height: 12px;
		display: flex;
		align-items: center;
		justify-content: center;
		background: #351c31;
	}
	.snap-icon {
		margin-left: 2px;
		color: #a891a6;
	}
	.snap {
		width: 42px;
		height: 14px;
		padding: 0 3px;
		box-sizing: border-box;
		flex: none;
		display: flex;
		align-items: center;
		justify-content: space-between;
		background: #17030f;
	}
	.chooser {
		height: 19px;
		margin: 0 3px 0 4px;
		flex: none;
		display: flex;
		gap: 1px;
	}
	.nub {
		width: 11px;
		display: flex;
		align-items: center;
		justify-content: center;
		background: #331a30;
		color: #fff;
	}
	.pattern {
		width: 68px;
		display: flex;
		align-items: center;
		justify-content: flex-end;
		padding-right: 2px;
		box-sizing: border-box;
		background: linear-gradient(90deg, #f6bff0, #efc6e9);
		color: #6d4068;
	}
	.news {
		width: 110px;
		height: 23px;
		margin-left: 2px;
		padding: 2px;
		box-sizing: border-box;
		display: flex;
		justify-content: space-between;
		background: #613c68;
	}
	.news-globe {
		display: flex;
		align-items: center;
		color: #d9cbd8;
	}
	.news-globe sup {
		width: 4px;
		margin: -10px 0 0 -3px;
		font-size: 7px;
		color: #fff;
	}

	/* ---------- browser ---------- */
	.work {
		display: grid;
		grid-template-columns: 221px 1fr;
		min-height: 0;
	}
	.browser {
		display: grid;
		grid-template-rows: 17px 22px 518px 69px 19px;
		border-right: 1px solid #200819;
		background: #1b0315;
	}
	.browser-head {
		display: flex;
		align-items: center;
		gap: 3.4px;
		padding-left: 4px;
		background: #3f2239;
		color: #a58fa2;
	}
	.tabs {
		display: flex;
		align-items: center;
		background: #11010c;
		color: #9b8c98;
	}
	.tab {
		width: 37px;
		height: 16px;
		display: flex;
		align-items: center;
		justify-content: center;
	}
	.tab.on {
		width: 32px;
		margin: 0 1px 0 2px;
		height: 15px;
		border: 1px solid #b98bc4;
		border-radius: 4px;
		box-sizing: border-box;
		color: #b65bdc;
	}
	.tree {
		display: flex;
		overflow: hidden;
	}
	.rail {
		width: 9px;
		padding: 5px 2px 4px;
		box-sizing: border-box;
		display: flex;
		flex-direction: column;
	}
	.rail i {
		width: 2px;
		height: 27px;
		margin: 96px 0 auto 1px;
		background: #ead9e8;
	}
	ul {
		flex: 1;
		margin: 0;
		padding: 1px 0 0;
		list-style: none;
		background: linear-gradient(90deg, #210f12, #271713);
	}
	li {
		height: 14px;
		display: flex;
		align-items: center;
		gap: 5px;
		padding-left: 42px;
		color: #b9aaa6;
	}
	li.on {
		padding-left: 44px;
		border-left: 4px solid #54414a;
		background: #40302e;
		color: #f0e6e2;
	}
	.file path {
		fill: #dba77c;
	}
	.file .ink {
		fill: #2a1510;
	}
	.fav {
		margin: 0 2px 0 auto;
		color: #948782;
	}
	.preview {
		position: relative;
		margin-left: 9px;
		background: #000;
	}
	.preview > svg {
		display: block;
		fill: #f3f2f7;
	}
	.preview-play,
	.rate {
		position: absolute;
		bottom: 2px;
		display: flex;
		align-items: center;
	}
	.preview-play {
		left: 3px;
		width: 15px;
		height: 9px;
		justify-content: center;
		background: #bf6fe8;
		border-radius: 2px;
		color: #2b0c35;
	}
	.rate {
		right: 2px;
		bottom: 1px;
		gap: 2px;
		font-weight: 500;
	}
	.tags {
		display: flex;
		align-items: center;
		gap: 6px;
		padding: 2px 3px 0 13px;
		background: #0b0008;
		font-weight: 500;
	}

	/* ---------- playlist ---------- */
	.playlist {
		display: grid;
		grid-template-rows: 17px 1fr;
		min-width: 0;
		margin-left: 4px;
		background: #2d1029;
	}
	.title {
		display: flex;
		align-items: center;
		gap: 4.1px;
		padding-left: 6px;
		background: #3c2038;
		font-weight: 500;
		color: #f2e6f0;
	}
	.mag {
		margin: 0 5px 0 2px;
	}
	.draw {
		margin-right: 0;
		padding: 1px;
		border: 1px solid #d99a3c;
		border-radius: 2px;
		background: #5b3b25;
		color: #f0bb62;
	}
	.ring {
		margin: 0 -2px 0 4px;
		padding: 1px;
		border: 1px solid #b05ad6;
		border-radius: 50%;
	}
	.sep {
		margin-right: -1px;
		margin-left: -1px;
		color: #9b8499;
	}
	.body {
		display: grid;
		grid-template-columns: 104px 1fr;
		gap: 4px;
		min-height: 0;
	}
	.picker {
		display: grid;
		grid-template-rows: 27px 1fr 12px;
		min-width: 0;
		background: #2b0722;
	}
	.picker-tabs {
		display: flex;
		align-items: center;
		gap: 13px;
		padding: 7px 0 0 2px;
		background: #3a1c35;
		color: #6d5069;
	}
	.picker-tabs span {
		width: 18px;
		display: flex;
		justify-content: center;
	}
	.picker-tabs .on {
		width: 28px;
		height: 12px;
		align-items: center;
		border: 1px solid #fff;
		border-radius: 3px;
		color: #fff;
	}
	.picker-main {
		display: flex;
		min-width: 0;
	}
	.picker-list {
		flex: 1;
		min-width: 0;
		padding: 1.5px 1px 0 3px;
		display: flex;
		flex-direction: column;
		gap: 2px;
	}
	.pat-item {
		height: 18.7px;
		display: flex;
		align-items: center;
		gap: 1.5px;
		padding-left: 2px;
		box-sizing: border-box;
		background: linear-gradient(#5d4056, #694c62);
		border-right: 3px solid transparent;
		background-clip: padding-box;
		color: #f2e5f0;
		font-weight: 600;
		overflow: hidden;
	}
	.pat-item:not(.used) {
		background-clip: border-box;
	}
	.pat-item.used {
		border-right-color: #f6c8f4;
	}
	.pat-item.current .score {
		stroke: #e0506c;
	}
	.score {
		flex: none;
		fill: none;
		stroke: #e6cfe3;
	}
	.thumb {
		min-width: 0;
		margin-left: auto;
		stroke: #7f6279;
		stroke-width: 0.8;
	}
	.picker-scroll {
		width: 10px;
		flex: none;
		background: #32122c;
	}
	.picker-scroll i {
		display: block;
		height: 9px;
		background: #51384e;
	}
	.picker-add {
		display: flex;
		align-items: center;
		justify-content: center;
		padding-right: 9px;
		background: #3a1c35;
		color: #fff;
	}

	.arranger {
		position: relative;
		display: grid;
		grid-template-rows: 27px 601px;
		overflow: hidden;
	}
	.arr-head {
		display: grid;
		grid-template-columns: 74px 859px 1fr;
		background: #1a0416;
	}
	.arr-tools {
		display: flex;
		flex-direction: column;
		justify-content: space-around;
		background: #553b50;
		clip-path: polygon(12px 0, 100% 0, 100% 100%, 0 100%);
		color: #80687c;
	}
	.arr-tools div {
		display: flex;
		align-items: center;
		gap: 7px;
		padding-left: 24px;
	}
	.arr-tools div + div {
		padding-left: 9px;
		gap: 11px;
	}
	.bright {
		color: #fff;
	}
	.arr-right {
		display: grid;
		grid-template-rows: 13px 14px;
		min-width: 0;
	}
	.overview {
		display: flex;
		background: #2c0d26;
	}
	.ov-nub {
		width: 13px;
		display: flex;
		align-items: center;
		justify-content: center;
		background: #402339;
	}
	.ov-track {
		stroke: #55384f;
		stroke-width: 2;
	}
	.ov-win {
		fill: #6d4268;
		stroke: #a88ba5;
	}
	.ov-light {
		stroke: #936389;
		stroke-width: 3;
	}
	.ov-dark {
		stroke: #46243f;
		stroke-width: 1.5;
	}
	.ov-cursor {
		stroke: #bc5adf;
		stroke-width: 1.5;
	}
	.ov-end {
		flex: 1;
		background: #402339;
	}
	.ruler {
		display: flex;
		align-items: center;
		overflow: hidden;
		font-size: 7px;
		letter-spacing: -0.2px;
		color: #8c7488;
	}
	.ruler span {
		width: 18.363px;
		flex: none;
	}
	.ruler .first {
		width: 18px;
		color: #6b5367;
	}
	.ruler .strong {
		font-size: 8px;
		color: #b8a1b5;
	}
	.corner-up {
		display: flex;
		align-items: flex-end;
		padding: 0 0 5px 3px;
		background: #3a1c35;
	}
	.arr-body {
		display: grid;
		grid-template-columns: 74px 859px 1fr;
		min-height: 0;
		overflow: hidden;
	}
	.head {
		height: 32px;
		display: flex;
	}
	.plate {
		width: 67px;
		height: 31px;
		padding: 0 0 0 1px;
		box-sizing: border-box;
		display: flex;
		justify-content: space-between;
		background: linear-gradient(#543a50, #462c42);
		border-bottom: 1px solid #311a2e;
		color: #eadde8;
		font-weight: 500;
	}
	.empty .plate {
		color: #8b7387;
	}
	.led {
		width: 3px;
		height: 3px;
		align-self: flex-end;
		margin: 0 5px 3px 0;
		border-radius: 50%;
		background: #c48ae0;
		box-shadow:
			0 0 0 1px #3d2039,
			0 0 0 2px #8f48b6;
	}
	.mark {
		width: 6px;
		height: 31px;
		margin-left: 1px;
		background: #221020;
	}
	.mark.pink {
		background: #f3bdf2;
	}
	.mark.rose {
		background: #c07aaa;
	}
	.lanes {
		position: relative;
		overflow: hidden;
		background:
			repeating-linear-gradient(90deg, rgba(20, 0, 18, 0.55) 0 1px, transparent 1px 18.363px) 18px 0,
			repeating-linear-gradient(90deg, rgba(20, 0, 18, 0.25) 0 0.8px, transparent 0.8px 4.591px) 18px 0,
			repeating-linear-gradient(90deg, #3d0830 0 73.45px, #330029 73.45px 146.9px) 18px 0,
			#330029;
	}
	.lane {
		position: relative;
		height: 32px;
		box-shadow: inset 0 -1px #1c0017;
	}
	.clip {
		position: absolute;
		top: 0;
		height: 31px;
		overflow: hidden;
		background: #28001f;
	}
	.clip-head {
		height: 10px;
		display: flex;
		align-items: center;
		gap: 2px;
		padding-left: 1px;
		background: #62455b;
		color: #eddfeb;
		font-weight: 500;
	}
	.clip-head .fit {
		margin-top: -1px;
	}
	.clip-body {
		display: block;
	}
	.notes {
		fill: #c4a3bd;
	}
	.notes.soft {
		fill: #a5849f;
	}
	.audio .clip-head {
		background: #616049;
		color: #e6e3d3;
	}
	.arrowed {
		flex: none;
		fill: currentColor;
	}
	.wave {
		fill: #cbc4b2;
	}
	.voice .wave {
		fill: #c9a4c4;
	}
	.auto .clip-head {
		background: linear-gradient(#454c78, #4f5079);
		color: #d7dbf0;
	}
	.area {
		fill: #432340;
		opacity: 0.85;
	}
	.curve {
		fill: none;
		stroke: #8d7796;
		stroke-width: 1.3;
	}
	.clip.muted {
		background: #380a2f;
	}
	.clip.muted .clip-head {
		background: #3f1236;
		color: #826078;
	}
	.clip.muted .wave {
		fill: #84496f;
	}
	.clip.muted .notes {
		fill: #7c4a6c;
	}
	.playhead {
		position: absolute;
		left: 232px;
		top: 0;
		width: 6px;
		height: 576px;
		background: linear-gradient(90deg, transparent, rgba(105, 20, 150, 0.55));
		border-right: 1px solid #8c4cbd;
	}
	.scroll {
		display: flex;
		flex-direction: column;
		background: #240f22;
	}
	.scroll i {
		height: 21px;
		background: #3a2036;
	}
	.scroll b {
		height: 14px;
		padding: 3px 0 0 3px;
		box-sizing: border-box;
		background: #3a2036;
	}
	.flag {
		position: absolute;
		left: 307px;
		top: 15px;
		fill: #a855d8;
	}
	.cursor {
		position: absolute;
		left: 384px;
		top: 16px;
		fill: #fff;
		stroke: #3a2a38;
		stroke-width: 0.6;
	}

	/* ---------- taskbar ---------- */
	.taskbar {
		display: flex;
		align-items: center;
		background: linear-gradient(90deg, #1b1b1e, #2a2018 22%, #1b1a1d 35%, #241c1b 60%, #2a1e14 72%, #1c1d22 86%);
		color: #f0eef0;
	}
	.start {
		margin: 0 6px;
		fill: #fff;
	}
	.search {
		width: 171px;
		height: 20px;
		box-sizing: border-box;
		display: flex;
		align-items: center;
		gap: 7px;
		padding-left: 7px;
		background: #343334;
		border: 1px solid #565355;
		color: #dcdadc;
	}
	.search > svg:first-child {
		fill: none;
		stroke: #eee;
		stroke-width: 1.2;
	}
	.stones {
		margin-left: auto;
		margin-right: 6px;
	}
	.task {
		width: 331px;
		margin-left: 4px;
		display: flex;
		align-items: center;
		gap: 4px;
	}
	.task i {
		width: 8px;
		height: 11px;
		background: #f5dc7c;
	}
	.apps {
		display: flex;
		height: 21px;
	}
	.app {
		width: 24.7px;
		box-sizing: border-box;
		display: flex;
		align-items: center;
		justify-content: center;
	}
	.app.open {
		background: linear-gradient(#cfa9b2, #cfa9b2) center bottom / 18px 1.5px no-repeat;
	}
	.app.active {
		background: linear-gradient(#cfa9b2, #cfa9b2) center bottom / 24px 1.5px no-repeat, #4b443f;
	}
	.tray {
		flex: 1;
		display: flex;
		align-items: center;
		justify-content: flex-end;
		gap: 4px;
		padding-right: 17px;
	}
	.weather {
		display: flex;
		gap: 5px;
	}
	.chev {
		margin: 0 4px 0 8px;
	}
	.net {
		fill: none;
		stroke: #e8e6e8;
	}
	.vol {
		margin-right: 1px;
	}
	.note {
		margin-left: 7px;
		fill: #fff;
	}
	.note .ln {
		stroke: #333;
	}
</style>
